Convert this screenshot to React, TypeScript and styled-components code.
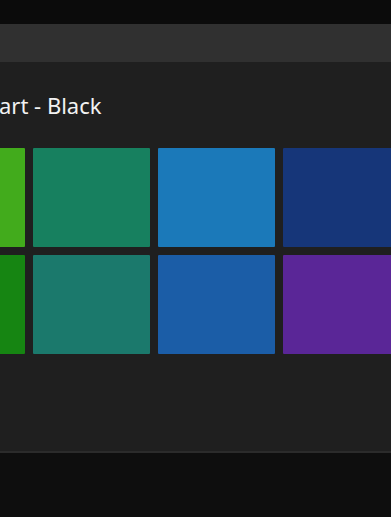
import styled, { createGlobalStyle } from 'styled-components';

const GlobalStyle = createGlobalStyle`
  html, body {
    margin: 0;
    padding: 0;
    background: #0c0c0c;
    font-family: 'Noto Sans', 'Open Sans', sans-serif;
    overflow: hidden;
  }
`;

const tiles = [
  '#42ab1c',
  '#17805f',
  '#1b79b9',
  '#163679',
  '#168512',
  '#1b796c',
  '#1b5da7',
  '#5a2697',
];

function App() {
  return (
    <>
      <GlobalStyle />
      <Screen>
        <TopStrip />
        <Header />
        <Panel>
          <Title>art - Black</Title>
          <Grid>
            {tiles.map((color, i) => (
              <Tile key={i} $color={color} />
            ))}
          </Grid>
        </Panel>
        <Footer />
      </Screen>
    </>
  );
}

const Screen = styled.div`
  width: 391px;
  height: 517px;
  display: flex;
  flex-direction: column;
  background: #0c0c0c;
  overflow: hidden;
`;

const TopStrip = styled.div`
  height: 24px;
  flex-shrink: 0;
  background: #0b0b0b;
`;

const Header = styled.div`
  height: 38px;
  flex-shrink: 0;
  background: #303030;
`;

const Panel = styled.div`
  height: 391px;
  flex-shrink: 0;
  display: flex;
  flex-direction: column;
  background: #1f1f1f;
  border-bottom: 2px solid #2b2b2b;
  box-sizing: border-box;
`;

const Title = styled.h1`
  margin: 28px 0 0 -1px;
  height: 30px;
  font-size: 22px;
  font-weight: 400;
  line-height: 30px;
  color: #f2f2f2;
  white-space: nowrap;
`;

const Grid = styled.div`
  margin: 28px 0 0 -92px;
  display: grid;
  grid-template-columns: repeat(4, 117px);
  grid-auto-rows: 99px;
  gap: 8px;
`;

const Tile = styled.div<{ $color: string }>`
  background: ${(p) => p.$color};
  border-radius: 1px;
`;

const Footer = styled.div`
  flex: 1;
  background: #0e0e0e;
`;

export default App;
